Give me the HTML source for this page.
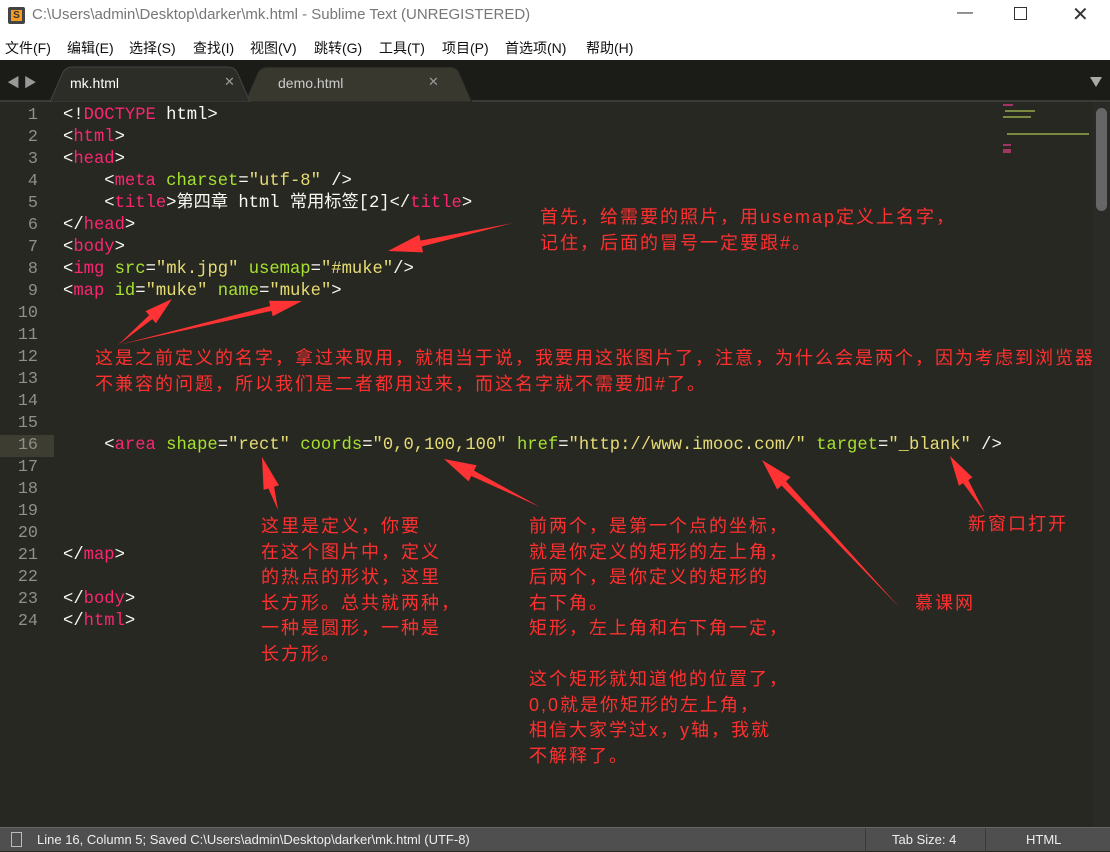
<!DOCTYPE html>
<html><head><meta charset="utf-8"><style>
*{margin:0;padding:0;box-sizing:border-box}
body{width:1110px;height:851px;overflow:hidden;background:#272822;position:relative;font-family:"Liberation Sans","Noto Sans CJK SC",sans-serif}
.title{position:absolute;left:0;top:0;width:1110px;height:31px;background:#fff;color:#777;font-size:15px}
.menu{position:absolute;left:0;top:31px;width:1110px;height:29px;background:#fff;color:#111;font-size:14px}
.menu span{position:absolute;top:7px}
.tabs{position:absolute;left:0;top:60px;width:1110px;height:42px;background:#1b1b18;border-bottom:2px solid #3a3a36}
.code{position:absolute;left:0;top:0;font-family:"Liberation Mono","Noto Sans CJK SC",monospace;font-size:17.2px;color:#f8f8f2;white-space:pre}
.ln{position:absolute;left:0;width:38px;text-align:right;color:#8f908a;font-family:"Liberation Mono",monospace;font-size:16.8px}
.t{color:#f92672}.a{color:#a6e22e}.s{color:#e6db74}
.l{position:absolute;left:63px;height:22px;line-height:22px}
.ann{position:absolute;color:#ff3030;font-size:18px;line-height:25.5px;letter-spacing:2px;white-space:pre;font-family:"Liberation Sans","Noto Sans CJK SC",sans-serif}
.status{position:absolute;left:0;top:827px;width:1110px;height:24px;background:#4f4f4f;border-top:1px solid #666;color:#eee;font-size:13px}
</style></head><body>
<div class="title">
<div style="position:absolute;left:8px;top:7px;width:17px;height:17px;background:#444;border-radius:2px"><div style="position:absolute;left:3px;top:3px;width:11px;height:11px;background:#f49b24;color:#333;font-size:10px;line-height:11px;text-align:center;font-weight:bold">S</div></div>
<span style="position:absolute;left:32px;top:6px">C:\Users\admin\Desktop\darker\mk.html - Sublime Text (UNREGISTERED)</span>
<span style="position:absolute;left:957px;top:4px;font-size:16px;color:#333">—</span>
<span style="position:absolute;left:1014px;top:7px;width:13px;height:13px;border:1px solid #333"></span>
<span style="position:absolute;left:1072px;top:2px;font-size:20px;color:#333">✕</span>
</div>
<div class="menu">
<span style="left:5px">文件(F)</span><span style="left:67px">编辑(E)</span><span style="left:129px">选择(S)</span><span style="left:193px">查找(I)</span><span style="left:250px">视图(V)</span><span style="left:314px">跳转(G)</span><span style="left:379px">工具(T)</span><span style="left:442px">项目(P)</span><span style="left:505px">首选项(N)</span><span style="left:586px">帮助(H)</span>
</div>
<div class="tabs">
<span style="position:absolute;left:7px;top:12px;color:#999;font-size:13px">◀ ▶</span>
<svg style="position:absolute;left:0;top:0" width="1110" height="42">
<path d="M245 42 L258 12 Q261 7 268 7 L450 7 Q456 7 459 12 L472 42 Z" fill="#38382f" stroke="#222" />
<path d="M50 42 L63 12 Q66 7 73 7 L228 7 Q234 7 237 12 L250 42 Z" fill="#2c2d27" stroke="#444"/>
<path d="M1090 17 L1102 17 L1096 27 Z" fill="#aaa"/>
</svg>
<span style="position:absolute;left:70px;top:15px;color:#fff;font-size:14px">mk.html</span>
<span style="position:absolute;left:224px;top:14px;color:#999;font-size:13px">✕</span>
<span style="position:absolute;left:278px;top:15px;color:#ccc;font-size:14px">demo.html</span>
<span style="position:absolute;left:428px;top:14px;color:#999;font-size:13px">✕</span>
</div>
<div style="position:absolute;left:0;top:435px;width:54px;height:22px;background:#3e3d32"></div>
<div style="position:absolute;left:1093px;top:102px;width:17px;height:725px;background:#2a2a26"></div>
<div style="position:absolute;left:1096px;top:108px;width:11px;height:103px;background:#666;border-radius:6px"></div>
<div style="position:absolute;left:1003px;top:104px;width:10px;height:2px;background:#a33463"></div>
<div style="position:absolute;left:1005px;top:110px;width:30px;height:2px;background:#7a8a40"></div>
<div style="position:absolute;left:1003px;top:116px;width:28px;height:2px;background:#7a8a40"></div>
<div style="position:absolute;left:1007px;top:133px;width:82px;height:2px;background:#7a8a40"></div>
<div style="position:absolute;left:1003px;top:144px;width:8px;height:2px;background:#a33463"></div>
<div style="position:absolute;left:1003px;top:149px;width:8px;height:4px;background:#a33463"></div>
<div class="code" id="code"></div>
<div class="ann" style="left:540px;top:205px">首先，给需要的照片，用usemap定义上名字，
记住，后面的冒号一定要跟#。</div>
<div class="ann" style="left:95px;top:346px">这是之前定义的名字，拿过来取用，就相当于说，我要用这张图片了，注意，为什么会是两个，因为考虑到浏览器
不兼容的问题，所以我们是二者都用过来，而这名字就不需要加#了。</div>
<div class="ann" style="left:261px;top:514px">这里是定义，你要
在这个图片中，定义
的热点的形状，这里
长方形。总共就两种，
一种是圆形，一种是
长方形。</div>
<div class="ann" style="left:529px;top:514px">前两个，是第一个点的坐标，
就是你定义的矩形的左上角，
后两个，是你定义的矩形的
右下角。
矩形，左上角和右下角一定，

这个矩形就知道他的位置了，
0,0就是你矩形的左上角，
相信大家学过x，y轴，我就
不解释了。</div>
<div class="ann" style="left:968px;top:512px">新窗口打开</div>
<div class="ann" style="left:915px;top:591px">慕课网</div>
<svg id="arr" style="position:absolute;left:0;top:0" width="1110" height="851"></svg>
<div class="status">
<span style="position:absolute;left:11px;top:4px;width:11px;height:15px;border:1px solid #bbb"></span>
<span style="position:absolute;left:37px;top:4px">Line 16, Column 5; Saved C:\Users\admin\Desktop\darker\mk.html (UTF-8)</span>
<span style="position:absolute;left:865px;top:0;width:1px;height:24px;background:#3a3a3a"></span>
<span style="position:absolute;left:892px;top:4px">Tab Size: 4</span>
<span style="position:absolute;left:985px;top:0;width:1px;height:24px;background:#3a3a3a"></span>
<span style="position:absolute;left:1026px;top:4px">HTML</span>
</div>
<script>
var L=[
'&lt;!<span class="t">DOCTYPE</span> html&gt;',
'&lt;<span class="t">html</span>&gt;',
'&lt;<span class="t">head</span>&gt;',
'    &lt;<span class="t">meta</span> <span class="a">charset</span>=<span class="s">"utf-8"</span> /&gt;',
'    &lt;<span class="t">title</span>&gt;第四章 html 常用标签[2]&lt;/<span class="t">title</span>&gt;',
'&lt;/<span class="t">head</span>&gt;',
'&lt;<span class="t">body</span>&gt;',
'&lt;<span class="t">img</span> <span class="a">src</span>=<span class="s">"mk.jpg"</span> <span class="a">usemap</span>=<span class="s">"#muke"</span>/&gt;',
'&lt;<span class="t">map</span> <span class="a">id</span>=<span class="s">"muke"</span> <span class="a">name</span>=<span class="s">"muke"</span>&gt;',
'','','','','','',
'    &lt;<span class="t">area</span> <span class="a">shape</span>=<span class="s">"rect"</span> <span class="a">coords</span>=<span class="s">"0,0,100,100"</span> <span class="a">href</span>=<span class="s">"http://www.imooc.com/"</span> <span class="a">target</span>=<span class="s">"_blank"</span> /&gt;',
'','','','',
'&lt;/<span class="t">map</span>&gt;','',
'&lt;/<span class="t">body</span>&gt;',
'&lt;/<span class="t">html</span>&gt;'];
var h='';
for(var i=0;i<L.length;i++){var y=105+22*i;
h+='<div class="ln" style="top:'+y+'px;line-height:22px">'+(i+1)+'</div><div class="l" style="top:'+y+'px">'+L[i]+'</div>';}
document.getElementById('code').innerHTML=h;
function arrow(x1,y1,x2,y2,hl,hw,sw){var dx=x2-x1,dy=y2-y1,d=Math.hypot(dx,dy),ux=dx/d,uy=dy/d,px=-uy,py=ux;
var bx=x2-ux*hl,by=y2-uy*hl;
var p=[[x1,y1],[bx+px*sw,by+py*sw],[bx+px*hw,by+py*hw],[x2,y2],[bx-px*hw,by-py*hw],[bx-px*sw,by-py*sw]];
return '<polygon fill="#ff3333" points="'+p.map(function(q){return q[0].toFixed(1)+','+q[1].toFixed(1)}).join(' ')+'"/>';}
document.getElementById('arr').innerHTML=
arrow(513,223,388,251,34,9,3)+arrow(118,345,172,299,28,8,2.5)+arrow(118,345,302,301,32,8,2.5)+
arrow(278,510,262,457,32,8,3)+arrow(540,507,444,459,32,9,3)+arrow(900,608,762,460,32,9,3)+arrow(985,513,950,456,30,8,3);
</script>
</body></html>
